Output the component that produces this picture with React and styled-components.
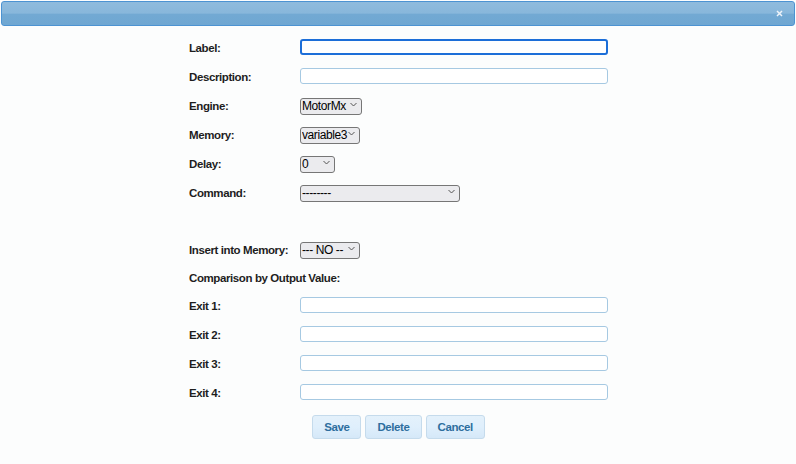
import React from 'react';
import styled, { createGlobalStyle } from 'styled-components';

const GlobalStyle = createGlobalStyle`
    html, body {
        margin: 0;
        padding: 0;
        background: #fcfdfd;
        font-family: "Liberation Sans", Arial, sans-serif;
    }
`;

// Dialog shell
const Dialog = styled.div`
    width: 796px;
    height: 464px;
    box-sizing: border-box;
    padding: 1px;
    background: #fcfdfd;
`;

const TitleBar = styled.div`
    height: 23px;
    border: 1px solid #4c93d2;
    border-radius: 3px;
    background: linear-gradient(to bottom, #8fbbdd 0%, #88b7db 48%, #72a9d3 54%, #6fa7d2 100%);
    display: flex;
    align-items: center;
    justify-content: flex-end;
    padding-right: 11px;
`;

const CloseButton = styled.span`
    width: 8px;
    height: 8px;
    display: flex;
    align-items: center;
    justify-content: center;
`;

const Body = styled.div`
    display: flex;
    flex-direction: column;
    align-items: center;
    padding-top: 6px;
`;

const Form = styled.div`
    width: 420px;
    margin-left: 2px;
    display: flex;
    flex-direction: column;
`;

const Row = styled.div`
    height: ${p => p.$h || 29}px;
    display: flex;
    align-items: center;
`;

const Label = styled.label`
    width: 111px;
    flex-shrink: 0;
    padding-top: 2px;
    font-size: 11.5px;
    letter-spacing: -0.4px;
    font-weight: bold;
    color: #1e1e1e;
    white-space: nowrap;
`;

const TextInput = styled.input`
    width: 308px;
    height: 16px;
    box-sizing: border-box;
    border: ${p => (p.$focused ? '2px solid #1c6ed8' : '1px solid #a6c9e2')};
    border-radius: 3px;
    background: #fff;
    padding: 0 3px;
    font-size: 12px;
    font-family: "Liberation Sans", Arial, sans-serif;
    outline: none;
`;

const SelectWrap = styled.div`
    position: relative;
    width: ${p => p.$w}px;
    height: 17px;
`;

const Select = styled.select`
    appearance: none;
    -webkit-appearance: none;
    width: 100%;
    height: 100%;
    box-sizing: border-box;
    border: 1px solid #767676;
    border-radius: 3px;
    background: #ebebee;
    color: #000;
    font-size: 12px;
    letter-spacing: -0.4px;
    font-family: "Liberation Sans", Arial, sans-serif;
    padding: 0 9px 0 1px;
    outline: none;
`;

const Chevron = styled.svg`
    position: absolute;
    right: 5px;
    top: 6px;
    pointer-events: none;
`;

const Buttons = styled.div`
    display: flex;
    gap: 4px;
    margin-top: 9px;
    margin-left: 1px;
`;

const Button = styled.button`
    height: 24px;
    padding: 0 11px;
    border: 1px solid #c5dbec;
    border-radius: 3px;
    background: linear-gradient(to bottom, #e4f1fb 0%, #dfeffc 50%, #d5e8f8 100%);
    color: #2e6e9e;
    font-size: 11.5px;
    letter-spacing: -0.4px;
    font-weight: bold;
    font-family: "Liberation Sans", Arial, sans-serif;
    cursor: pointer;
`;

const CloseIcon = () => (
    <svg width="7" height="7" viewBox="0 0 7 7">
        <path d="M1 1 L6 6 M6 1 L1 6" stroke="#eef4fa" strokeWidth="1.5" />
    </svg>
);

const Dropdown = ({ w, children }) => (
    <SelectWrap $w={w}>
        <Select>{children}</Select>
        <Chevron width="7" height="5" viewBox="0 0 7 5">
            <path d="M0.5 1 L3.5 4 L6.5 1" fill="none" stroke="#555" strokeWidth="1" />
        </Chevron>
    </SelectWrap>
);

const App = () => {
    return (
        <Dialog>
            <GlobalStyle />
            <TitleBar>
                <CloseButton><CloseIcon /></CloseButton>
            </TitleBar>
            <Body>
                <Form>
                    <Row>
                        <Label>Label:</Label>
                        <TextInput type="text" $focused autoFocus />
                    </Row>
                    <Row>
                        <Label>Description:</Label>
                        <TextInput type="text" />
                    </Row>
                    <Row>
                        <Label>Engine:</Label>
                        <Dropdown w={62}><option>MotorMx</option></Dropdown>
                    </Row>
                    <Row>
                        <Label>Memory:</Label>
                        <Dropdown w={60}><option>variable3</option></Dropdown>
                    </Row>
                    <Row>
                        <Label>Delay:</Label>
                        <Dropdown w={35}><option>0</option></Dropdown>
                    </Row>
                    <Row>
                        <Label>Command:</Label>
                        <Dropdown w={160}><option>--------</option></Dropdown>
                    </Row>
                    <Row $h={28} />
                    <Row>
                        <Label>Insert into Memory:</Label>
                        <Dropdown w={60}><option>--- NO --</option></Dropdown>
                    </Row>
                    <Row $h={27}>
                        <Label>Comparison by Output Value:</Label>
                    </Row>
                    <Row>
                        <Label>Exit 1:</Label>
                        <TextInput type="text" />
                    </Row>
                    <Row>
                        <Label>Exit 2:</Label>
                        <TextInput type="text" />
                    </Row>
                    <Row>
                        <Label>Exit 3:</Label>
                        <TextInput type="text" />
                    </Row>
                    <Row>
                        <Label>Exit 4:</Label>
                        <TextInput type="text" />
                    </Row>
                </Form>
                <Buttons>
                    <Button>Save</Button>
                    <Button>Delete</Button>
                    <Button>Cancel</Button>
                </Buttons>
            </Body>
        </Dialog>
    );
};

export default App;
